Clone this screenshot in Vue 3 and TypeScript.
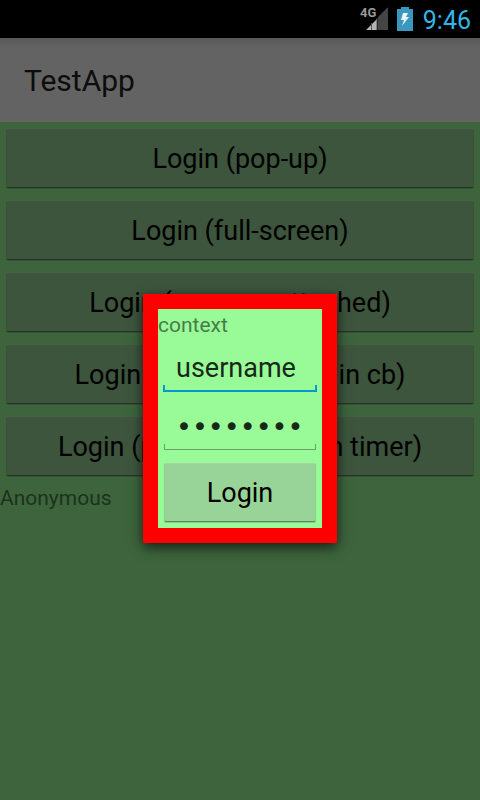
<script setup lang="ts">
import { ref } from 'vue'

const actions: string[] = [
  'Login (pop-up)',
  'Login (full-screen)',
  'Login (pop-up - attached)',
  'Login (pop-up, closed in cb)',
  'Login (pop-up, closed in timer)',
]
const user = ref('username')
const password = ref('password')
</script>

<template>
  <div class="screen">
    <header class="status">
      <svg class="signal" viewBox="0 0 28 26" role="img" aria-label="4G signal">
        <path d="M28 1V24H18V11Z" fill="#444" />
        <path d="M6 24L17 13V24Z" fill="#b4b4b4" />
        <path d="M11.500 17V24M17 12V24" stroke="#555" />
        <text x="0" y="11">4G</text>
      </svg>
      <svg class="battery" viewBox="0 0 16 24" role="img" aria-label="Battery charging">
        <path d="M4 0H12V2H16V24H0V2H4Z" fill="#3a98be" />
        <path d="M6 6H11L9 10H12L5 19L7 13H4Z" fill="#e8f4f8" />
      </svg>
      <time>9:46</time>
    </header>
    <div class="window">
      <div class="app-bar"><h1>TestApp</h1></div>
      <main>
        <button v-for="action in actions" :key="action" class="btn" type="button">{{ action }}</button>
        <p class="label">Anonymous</p>
      </main>
      <div class="dim">
        <form class="dialog" role="dialog" aria-label="Login" @submit.prevent>
          <p class="label">context</p>
          <input v-model="user" class="field focused" type="text" aria-label="Username" />
          <input v-model="password" class="field secret" type="password" aria-label="Password" />
          <button class="btn" type="submit">Login</button>
        </form>
      </div>
    </div>
  </div>
</template>

<style>
body {
  margin: 0;
  background: #3d643d;
}
</style>

<style scoped>
.screen {
  display: flex;
  flex-direction: column;
  min-height: 100vh;
  font-family: Roboto, "Liberation Sans", sans-serif;
}
.status {
  box-sizing: border-box;
  display: flex;
  align-items: center;
  justify-content: flex-end;
  height: 38px;
  padding-right: 9px;
  background: #000;
  color: #33b5e5;
  font-size: 25px;
}
time {
  padding-top: 2px;
}
.signal {
  overflow: visible;
  width: 28px;
  height: 26px;
  margin-right: 9px;
}
.signal text {
  fill: #999;
  font: bold 13px Roboto, sans-serif;
}
.battery {
  width: 16px;
  height: 24px;
  margin-right: 10px;
}
.window {
  position: relative;
  display: flex;
  flex: 1;
  flex-direction: column;
  background: #98fb98;
}
.app-bar {
  display: flex;
  align-items: center;
  height: 84px;
  padding: 0 24px;
  background: linear-gradient(#dedede, #f7f7f7 10px);
}
h1 {
  margin: 0;
  color: #222;
  font-size: 30px;
  font-weight: 400;
}
main {
  display: flex;
  flex-direction: column;
}
.btn {
  box-sizing: border-box;
  height: 59px;
  margin: 7px 6px 6px;
  padding: 0 12px;
  border: 1px solid #91cc91;
  border-top-color: #adcfad;
  border-bottom-color: #5c875c;
  border-radius: 2px;
  background: #98d498;
  box-shadow: 0 1px 0 rgba(0, 0, 0, 0.15);
  color: #000;
  font: 27px Roboto, "Liberation Sans", sans-serif;
  white-space: nowrap;
}
.label {
  margin: 0;
  color: #4a7b4a;
  font-size: 21px;
  line-height: 32px;
}
.dim {
  position: absolute;
  inset: 0;
  display: grid;
  place-items: center;
  padding-bottom: 1px;
  background: rgba(0, 0, 0, 0.6);
}
.dialog {
  display: flex;
  flex-direction: column;
  width: 164px;
  border: 15px solid #f00;
  background: #98fb98;
  box-shadow: 0 4px 12px rgba(0, 0, 0, 0.7);
}
.field {
  box-sizing: border-box;
  min-width: 0;
  height: 48px;
  margin: 10px 6px 6px;
  padding: 0 12px;
  border: 0;
  border-radius: 0;
  outline: 0;
  background:
    linear-gradient(#63a363, #63a363) left bottom / 100% 1px no-repeat,
    linear-gradient(#63a363, #63a363) left bottom / 1px 6px no-repeat,
    linear-gradient(#63a363, #63a363) right bottom / 1px 6px no-repeat;
  color: #182818;
  font: 27px Roboto, "Liberation Sans", sans-serif;
}
.focused {
  margin: 3px 5px 0;
  padding: 0 13px;
  background:
    linear-gradient(#0099cc, #0099cc) left bottom / 100% 2px no-repeat,
    linear-gradient(#0099cc, #0099cc) left bottom / 2px 7px no-repeat,
    linear-gradient(#0099cc, #0099cc) right bottom / 2px 7px no-repeat;
}
.secret {
  font-family: "DejaVu Sans", sans-serif;
}
</style>
